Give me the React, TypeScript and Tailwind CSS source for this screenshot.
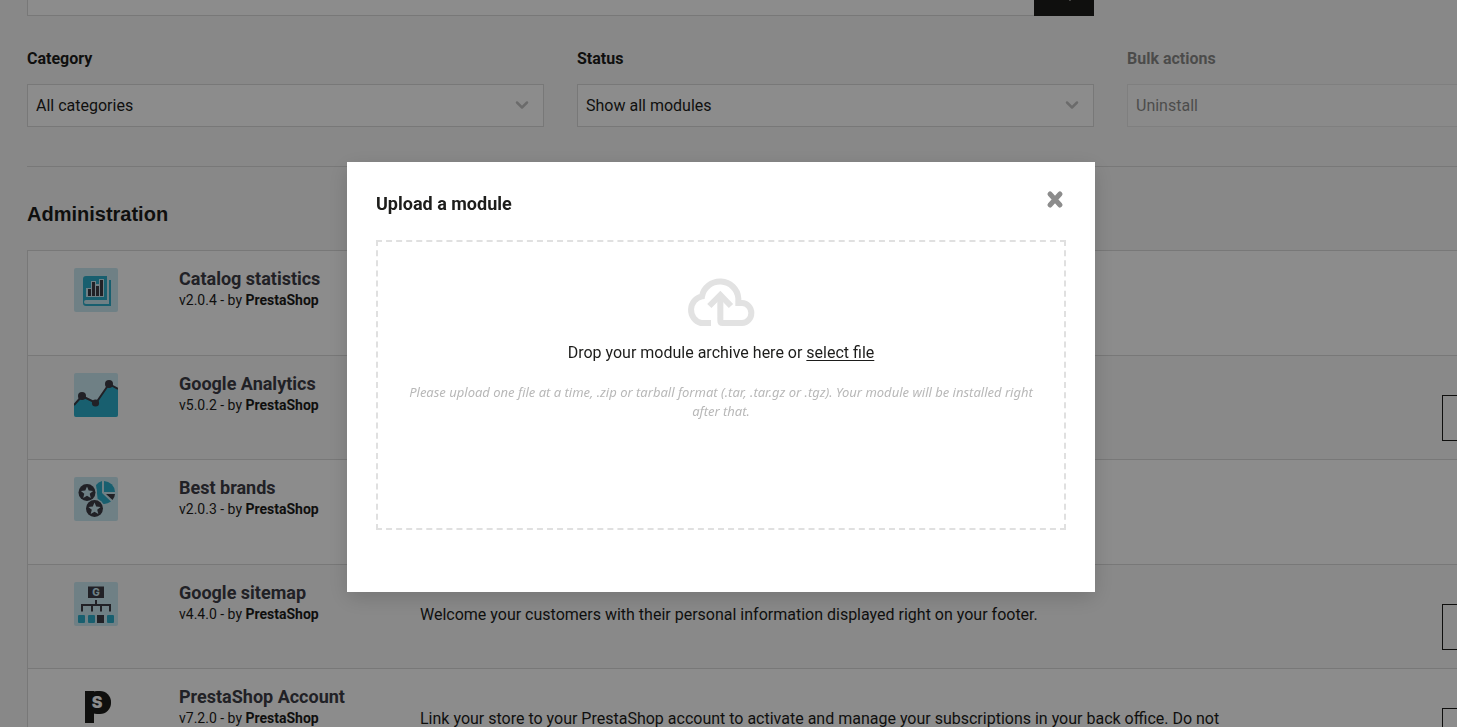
import { FC, ReactNode } from 'react';
import { ChevronDown, Search } from 'lucide-react';

const CatalogIcon = () => (
  <svg viewBox="0 0 44 44" className="size-11" aria-hidden="true">
    <rect width="44" height="44" rx="2" fill="#cbeaf3" />
    <path d="M12 8h21v24H12a2 2 0 0 0 0 4h23V12h2v26H12a3 3 0 0 1-3-3V11a3 3 0 0 1 3-3z" fill="#2caeca" />
    <path d="M12 20h5v-7h5v3h3v-5h5v18H12z" fill="#cbeaf3" />
    <path d="M14 21h3v7h-3zM18 14h3v14h-3zM22 18h3v10h-3zM26 12h3v16h-3z" fill="#3c3c45" />
  </svg>
);

const AnalyticsIcon = () => (
  <svg viewBox="0 0 44 44" className="size-11" aria-hidden="true">
    <rect width="44" height="44" rx="2" fill="#cbeaf3" />
    <path d="M0 32L8 23l14 7L35 11l9 5v26a2 2 0 0 1-2 2H2a2 2 0 0 1-2-2z" fill="#2caeca" />
    <path d="M0 32l8-9 14 7 13-19 9 5" fill="none" stroke="#3c3c45" strokeWidth="2" />
    <circle cx="8" cy="23" r="4" fill="#3c3c45" />
    <circle cx="21.500" cy="30" r="3.600" fill="#3c3c45" />
    <circle cx="35" cy="11" r="4" fill="#3c3c45" />
  </svg>
);

const BrandsIcon = () => (
  <svg viewBox="0 0 44 44" className="size-11" aria-hidden="true">
    <rect width="44" height="44" rx="2" fill="#cbeaf3" />
    <path d="M28 4v12l9 8.500A11.500 11.500 0 0 1 24 25L22 8a12 12 0 0 1 6-4z" fill="#2caeca" />
    <path d="M30 4a11.500 11.500 0 0 1 11 11H30z" fill="#2caeca" />
    <path d="M32 17h9a10 10 0 0 1-2.500 6z" fill="#3c3c45" />
    <circle cx="13" cy="15.500" r="10" fill="#cbeaf3" />
    <circle cx="20.500" cy="31.500" r="10" fill="#cbeaf3" />
    <circle cx="13" cy="15.500" r="8.500" fill="#3c3c45" />
    <circle cx="20.500" cy="31.500" r="8.500" fill="#3c3c45" />
    <path id="star" d="M13 9.500l1.700 4.100 4.400.3-3.400 2.800 1.100 4.300-3.800-2.300L9.200 21l1.100-4.300-3.400-2.800 4.400-.3z" fill="#cbeaf3" />
    <use href="#star" x="7.500" y="16" />
  </svg>
);

const SitemapIcon = () => (
  <svg viewBox="0 0 44 44" className="size-11" aria-hidden="true">
    <rect width="44" height="44" rx="2" fill="#cbeaf3" />
    <rect x="14" y="4.500" width="16" height="11.500" fill="#3c3c45" />
    <text x="22" y="14" textAnchor="middle" fontFamily="Inter, sans-serif" fontSize="10" fontWeight="800" fill="#cbeaf3">G</text>
    <path d="M8 29.500V23h28v6.500M18 23v6.500M27 23v6.500M22 18v5" fill="none" stroke="#3c3c45" strokeWidth="2" />
    <rect x="4" y="33" width="7" height="8" rx="1" fill="#2caeca" />
    <rect x="14" y="33" width="7" height="8" rx="1" fill="#2caeca" />
    <rect x="23" y="33" width="7" height="8" fill="#3c3c45" />
    <rect x="33" y="33" width="7" height="8" rx="1" fill="#2caeca" />
  </svg>
);

const AccountIcon = () => (
  <svg viewBox="0 0 44 44" className="size-11" aria-hidden="true">
    <rect x="11" y="5" width="9" height="32" fill="#1d1d1b" />
    <rect x="12" y="5" width="25" height="23" rx="11" fill="#1d1d1b" />
    <text x="23" y="22" textAnchor="middle" fontFamily="Inter, sans-serif" fontSize="16" fontWeight="900" fill="#fff">S</text>
  </svg>
);

const CloudUpload = () => (
  <svg viewBox="80 54 210 150" className="h-[50px] w-[70px]" fill="none" stroke="#e2e2e2" strokeWidth="18" aria-hidden="true">
    <path d="M155 192H125A40 41 0 0 1 128 112A55 54 0 0 1 237 118V132H248A28 30 0 0 1 248 192H190Q183 192 183 185V112" />
    <path d="M150 141L183 108L215 141" />
  </svg>
);

interface Module {
  name: string;
  version: string;
  icon: ReactNode;
  description?: string;
  configurable?: boolean;
}

const modules: Module[] = [
  { name: 'Catalog statistics', version: 'v2.0.4', icon: <CatalogIcon /> },
  { name: 'Google Analytics', version: 'v5.0.2', icon: <AnalyticsIcon />, configurable: true },
  { name: 'Best brands', version: 'v2.0.3', icon: <BrandsIcon /> },
  {
    name: 'Google sitemap',
    version: 'v4.4.0',
    icon: <SitemapIcon />,
    description: 'Welcome your customers with their personal information displayed right on your footer.',
    configurable: true,
  },
  {
    name: 'PrestaShop Account',
    version: 'v7.2.0',
    icon: <AccountIcon />,
    description: 'Link your store to your PrestaShop account to activate and manage your subscriptions in your back office. Do not',
    configurable: true,
  },
];

interface FilterProps {
  id: string;
  label: string;
  value: string;
  disabled?: boolean;
}

const Filter: FC<FilterProps> = ({ id, label, value, disabled }) => (
  <div className={disabled ? 'opacity-50' : ''}>
    <label htmlFor={id} className="block text-base leading-[22px] font-bold">{label}</label>
    <div className="relative mt-[14px]">
      <select id={id} disabled={disabled} className="block h-[43px] w-full appearance-none border border-[#dadada] bg-white px-2 text-base opacity-100">
        <option>{value}</option>
      </select>
      <ChevronDown className="pointer-events-none absolute top-[11px] right-3 size-5 text-[#c4c4c4]" strokeWidth={3} />
    </div>
  </div>
);

const ModuleRow: FC<{ module: Module }> = ({ module }) => (
  <li className="grid grid-cols-[151px_241px_1fr_201px] border-t border-[#dadada] odd:h-[105px] odd:bg-white even:h-[104px] even:bg-[#f9f9f9]">
    <div className="pt-[17px] pl-[46px]">{module.icon}</div>
    <div className="pt-4">
      <h3 className="text-lg leading-6 font-bold text-[#3c3c45]">{module.name}</h3>
      <p className="text-sm leading-[18px]">
        {module.version} - by <b>PrestaShop</b>
      </p>
    </div>
    <p className="pt-10 text-base leading-5">{module.description}</p>
    <div className="pt-[39px]">
      {module.configurable && (
        <button aria-label={`Configure ${module.name}`} className="h-[46px] w-40 border border-[#1d1d1b]" />
      )}
    </div>
  </li>
);

const UploadModal = () => (
  <div className="fixed inset-0 flex items-start justify-center bg-black/45 pt-[162px] pr-[15px]">
    <div role="dialog" aria-labelledby="upload-title" className="w-[748px] bg-white px-[29px] pt-7 pb-[62px] shadow-[0_6px_20px_rgba(0,0,0,0.15)]">
      <div className="flex items-start justify-between">
        <h2 id="upload-title" className="pt-0.5 text-lg leading-6 font-bold">Upload a module</h2>
        <button aria-label="Close" className="text-[#8c8c8c]">
          <svg viewBox="0 0 20 20" className="size-5" fill="none" stroke="currentColor" strokeWidth="5" strokeLinecap="round">
            <path d="M4 4l10 11M14 4L4 15" />
          </svg>
        </button>
      </div>
      <div className="mt-6 flex h-[290px] flex-col items-center border-2 border-dashed border-[#e0e0e0] px-6 pt-[35px] text-center">
        <CloudUpload />
        <p className="mt-4 text-base leading-5">
          Drop your module archive here or <a href="#select" className="underline underline-offset-2">select file</a>
        </p>
        <p className="mt-5 font-['Noto_Sans',sans-serif] text-[13px] leading-[19px] text-[#b8b8b8] italic">
          Please upload one file at a time, .zip or tarball format (.tar, .tar.gz or .tgz). Your module will be installed right after that.
        </p>
      </div>
    </div>
  </div>
);

export default function App() {
  return (
    <div className="h-screen overflow-hidden bg-[#f8f8f8] font-['Roboto',sans-serif] text-[#1d1d1b]">
      <main className="ml-[27px] min-w-[1617px]">
        <div className="grid grid-cols-3 gap-[33px]">
          <form className="col-span-2 -mt-7 flex h-11">
            <input type="text" aria-label="Search modules" className="flex-1 border border-r-0 border-[#dadada] bg-white px-2" />
            <button type="button" aria-label="Search" className="flex w-[60px] items-center justify-center bg-[#1d1d1b] text-white">
              <Search className="size-4" />
            </button>
          </form>
        </div>
        <div className="mt-8 grid grid-cols-3 gap-[33px]">
          <Filter id="category" label="Category" value="All categories" />
          <Filter id="status" label="Status" value="Show all modules" />
          <Filter id="bulk" label="Bulk actions" value="Uninstall" disabled />
        </div>
        <hr className="mt-[39px] border-[#dadada]" />
        <h2 className="mt-8 mb-[21px] font-['Liberation_Sans',sans-serif] text-xl leading-[30px] font-bold">Administration</h2>
        <ul className="border-x border-[#dadada]">
          {modules.map((m) => (
            <ModuleRow key={m.name} module={m} />
          ))}
        </ul>
      </main>
      <UploadModal />
    </div>
  );
}
